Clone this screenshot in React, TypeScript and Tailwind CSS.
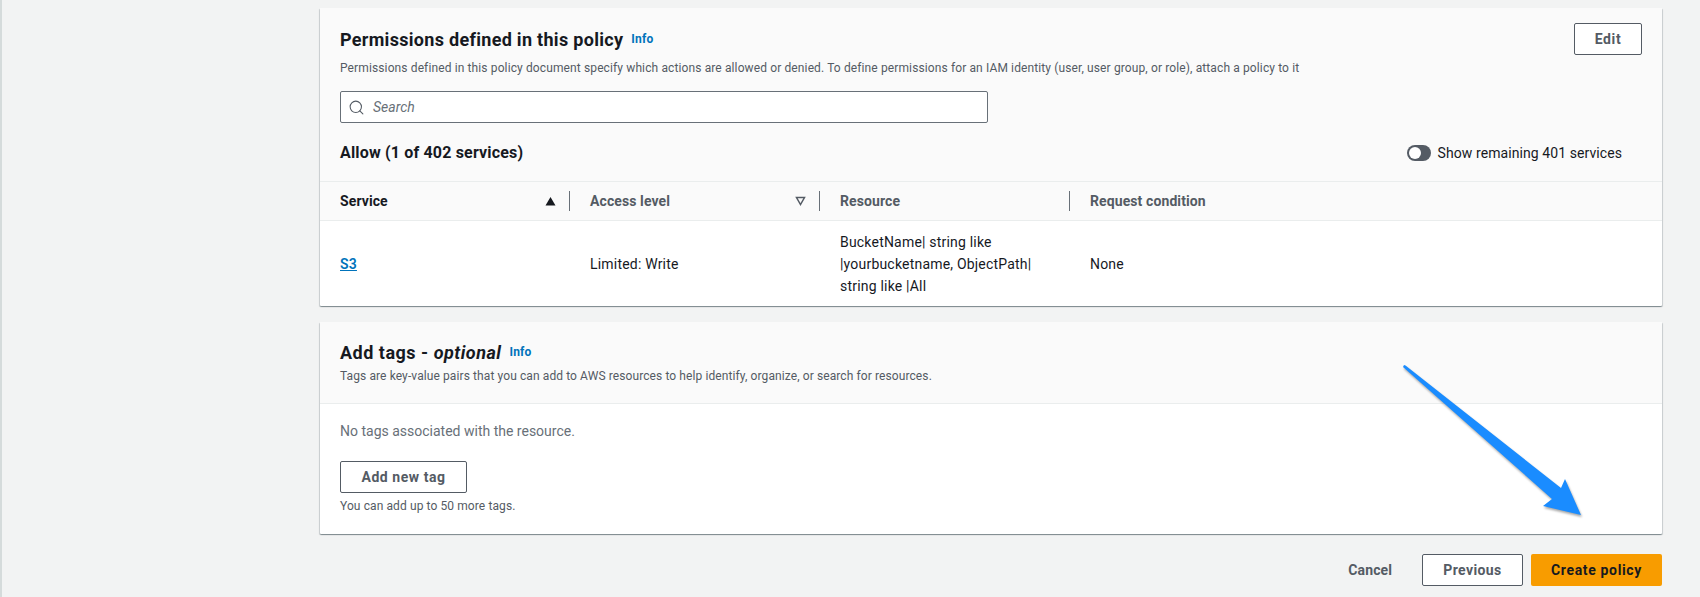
import React from "react";
import { Search } from "lucide-react";

const cardShadow =
  "shadow-[0_1px_1px_0_rgba(0,28,36,0.3),1px_1px_1px_0_rgba(0,28,36,0.15),-1px_1px_1px_0_rgba(0,28,36,0.15)]";

const InfoLink = () => (
  <a className="text-[12px] font-bold tracking-[0.2px] text-[#0073bb] leading-none">Info</a>
);

const HeaderCell: React.FC<{ label: string; sort?: "up" | "down"; muted?: boolean; divider?: boolean }> = ({
  label,
  sort,
  muted,
  divider = true,
}) => (
  <div className="relative flex items-center justify-between h-full pl-5 pr-[13px]">
    <span className={`text-[14px] font-bold tracking-[0.1px] ${muted ? "text-[#545b64]" : "text-[#16191f]"}`}>{label}</span>
    {sort === "up" && (
      <svg width="11" height="10" viewBox="0 0 11 10" className="mr-px">
        <path d="M5.5 1 L10.5 9.5 L0.5 9.5 Z" fill="#16191f" />
      </svg>
    )}
    {sort === "down" && (
      <svg width="11" height="10" viewBox="0 0 11 10" className="mr-px">
        <path d="M1.5 1.5 L9.5 1.5 L5.5 8.5 Z" fill="none" stroke="#545b64" strokeWidth="1.5" />
      </svg>
    )}
    {divider && <span className="absolute right-0 top-[9px] bottom-[9px] w-px bg-[#687078]" />}
  </div>
);

const App: React.FC = () => {
  return (
    <div className="relative h-[597px] w-[1700px] overflow-hidden bg-[#f2f3f3] font-['Roboto',sans-serif] text-[#16191f] border-l-2 border-[#d5dbdb]">
      <div className="ml-[318px] mr-[38px] pt-[8px]">
        {/* permissions card */}
        <section className={`bg-white rounded-[1px] ${cardShadow}`}>
          <div className="bg-[#fafafa]">
            <div className="flex justify-between pl-5 pr-5 pt-[15px]">
              <div>
                <div className="flex items-center gap-2 h-[32px]">
                  <h2 className="text-[18px] font-bold tracking-[0.3px]">Permissions defined in this policy</h2>
                  <InfoLink />
                </div>
                <p className="mt-[5px] text-[12px] leading-[16px] tracking-[0.12px] text-[#545b64]">
                  Permissions defined in this policy document specify which actions are allowed or denied. To define
                  permissions for an IAM identity (user, user group, or role), attach a policy to it
                </p>
              </div>
              <button className="h-[32px] w-[68px] rounded-[2px] border border-[#545b64] bg-white text-[14px] font-bold tracking-[0.6px] text-[#545b64]">
                Edit
              </button>
            </div>

            <div className="ml-5 mt-[15px] flex h-[32px] w-[648px] items-center rounded-[2px] border border-[#687078] bg-white pl-[7px]">
              <Search size={17} strokeWidth={1.5} className="text-[#545b64]" />
              <span className="ml-2 text-[14px] italic text-[#687078]">Search</span>
            </div>

            <div className="flex items-center justify-between pl-5 pr-[40px] pt-[2px] h-[58px]">
              <h3 className="text-[16px] font-bold tracking-[0.17px]">Allow (1 of 402 services)</h3>
              <div className="flex items-center gap-[7px]">
                <span className="relative h-4 w-6 rounded-full bg-[#545b64]">
                  <span className="absolute left-[2px] top-[2px] h-3 w-3 rounded-full bg-white" />
                </span>
                <span className="text-[14px] tracking-[0.08px] text-[#16191f]">Show remaining 401 services</span>
              </div>
            </div>

            <div className="grid h-[40px] grid-cols-[250px_250px_250px_1fr] border-y border-[#eaeded]">
              <HeaderCell label="Service" sort="up" />
              <HeaderCell label="Access level" sort="down" muted />
              <HeaderCell label="Resource" muted />
              <HeaderCell label="Request condition" muted divider={false} />
            </div>
          </div>

          <div className="grid h-[85px] grid-cols-[250px_250px_250px_1fr] items-center text-[14px] leading-[22px] tracking-[0.2px]">
            <a className="pl-5 font-semibold text-[#0073bb] underline">S3</a>
            <div className="pl-5">Limited: Write</div>
            <div className="pl-5 pr-4">BucketName| string like |yourbucketname, ObjectPath| string like |All</div>
            <div className="pl-5">None</div>
          </div>
        </section>

        {/* tags card */}
        <section className={`mt-4 bg-white rounded-[1px] ${cardShadow}`}>
          <div className="bg-[#fafafa] border-b border-[#eaeded] pl-5 pt-[17px] h-[82px]">
            <div className="flex items-center gap-2 h-[26px]">
              <h2 className="text-[18px] font-bold tracking-[0.5px]">
                Add tags - <em className="font-bold">optional</em>
              </h2>
              <InfoLink />
            </div>
            <p className="mt-[3px] text-[12px] leading-[16px] tracking-[0.1px] text-[#545b64]">
              Tags are key-value pairs that you can add to AWS resources to help identify, organize, or search for
              resources.
            </p>
          </div>
          <div className="pl-5 pt-[17px] h-[130px]">
            <p className="text-[14px] leading-[20px] text-[#687078]">No tags associated with the resource.</p>
            <button className="mt-[20px] h-[32px] w-[127px] rounded-[2px] border border-[#545b64] bg-white text-[14px] font-bold tracking-[0.55px] text-[#545b64]">
              Add new tag
            </button>
            <p className="mt-[5px] text-[12px] leading-[16px] tracking-[0.1px] text-[#545b64]">You can add up to 50 more tags.</p>
          </div>
        </section>

        {/* actions */}
        <div className="mt-5 flex items-center justify-end">
          <span className="mr-[30px] text-[14px] font-bold tracking-[0.1px] text-[#545b64]">Cancel</span>
          <button className="h-[32px] w-[101px] rounded-[2px] border border-[#545b64] bg-white text-[14px] font-bold tracking-[0.4px] text-[#545b64]">
            Previous
          </button>
          <button className="ml-2 h-[32px] w-[131px] rounded-[2px] bg-[#f89c00] text-[14px] font-bold tracking-[0.65px] text-[#16191f]">
            Create policy
          </button>
        </div>
      </div>

      {/* annotation arrow over the page */}
      <svg
        width="1700"
        height="597"
        viewBox="0 0 1700 597"
        className="pointer-events-none absolute -left-[2px] top-0 drop-shadow-[1px_2px_1px_rgba(0,0,0,0.35)]"
      >
        <path
          d="M1404 365 L1405.5 365.5 L1561 488 L1565 479 L1581 515 L1543 506 L1552 499 L1403 367 Z"
          fill="#1a8cff"
        />
      </svg>
    </div>
  );
};

export default App;
